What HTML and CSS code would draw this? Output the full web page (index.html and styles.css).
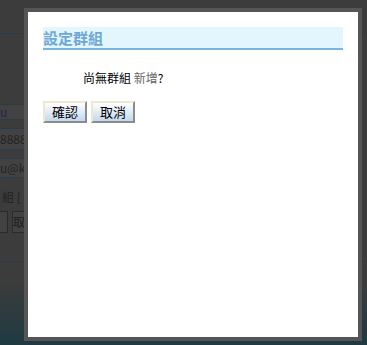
FILE: index.html
```html
<!DOCTYPE html>
<html lang="zh-Hant">
<head>
  <meta charset="UTF-8" />
  <meta name="viewport" content="width=device-width, initial-scale=1.0" />
  <title>設定群組</title>
  <link rel="stylesheet" href="styles.css">
</head>
<body>
  <div class="page">
    <div class="rule top-rule"></div>
    <div class="form">
      <div class="field small">u</div>
      <div class="field tall">8888</div>
      <div class="field">u@ke</div>
      <div class="label">組 [</div>
      <div class="btn-row">
        <span class="bg-btn"></span>
        <span class="bg-btn">取</span>
      </div>
    </div>
    <div class="rule bottom-rule"></div>
  </div>

  <div class="dialog">
    <h2 class="dialog-title">設定群組</h2>
    <p class="message">尚無群組 <a href="#" class="add-link">新增</a>?</p>
    <div class="actions">
      <button class="btn">確認</button>
      <button class="btn">取消</button>
    </div>
  </div>
</body>
</html>
```

FILE: styles.css
```css
body {
  margin: 0;
  width: 367px;
  height: 345px;
  overflow: hidden;
  font-family: "Noto Sans CJK TC", "Liberation Sans", sans-serif;
  background: linear-gradient(#3c3c3c 0, #3c3c3c 280px, #1f3a42 345px);
  position: relative;
}
.page {
  padding-top: 33px;
}
.rule {
  height: 1px;
  background: #2c3a4c;
}
.form {
  padding-top: 70px;
  width: 60px;
}
.field {
  height: 18px;
  margin-bottom: 8px;
  border-top: 1px solid #2c3a4c;
  border-bottom: 1px solid #2c3a4c;
  background: #424242;
  color: #222;
  font-size: 12px;
  line-height: 18px;
  white-space: nowrap;
}
.field.small {
  height: 14px;
  line-height: 14px;
  color: #2a2050;
}
.field.tall {
  height: 20px;
  line-height: 20px;
}
.label {
  font-size: 12px;
  color: #222;
  padding-left: 2px;
  margin-top: 10px;
  white-space: nowrap;
}
.btn-row {
  display: flex;
  gap: 4px;
  margin-top: 6px;
  margin-left: -14px;
}
.bg-btn {
  flex: none;
  width: 20px;
  height: 20px;
  border: 1px solid #2a2a2a;
  background: #424242;
  color: #1e1e1e;
  font-size: 12px;
  line-height: 20px;
}
.bottom-rule {
  margin-top: 28px;
}

.dialog {
  position: absolute;
  left: 24px;
  top: 8px;
  width: 300px;
  height: 295px;
  padding: 15px;
  background: #fff;
  border: 4px solid #555;
}
.dialog-title {
  margin: 0;
  height: 21px;
  background: #e3f6fd;
  border-bottom: 2px solid #7ab5e0;
  color: #6fa8d5;
  font-size: 15px;
  font-weight: bold;
  line-height: 21px;
}
.message {
  margin: 20px 0 0;
  padding-left: 40px;
  font-size: 12px;
  line-height: 16px;
  color: #000;
}
.add-link {
  color: #666;
  text-decoration: none;
}
.actions {
  display: flex;
  gap: 4px;
  margin-top: 15px;
}
.btn {
  width: 44px;
  height: 22px;
  padding: 0;
  font-family: inherit;
  font-size: 13px;
  line-height: 16px;
  color: #000;
  background: linear-gradient(#ffffff, #c2d8ee);
  border: 2px solid;
  border-color: #ede8d6 #8c8c8c #8c8c8c #ede8d6;
  cursor: pointer;
}
```
